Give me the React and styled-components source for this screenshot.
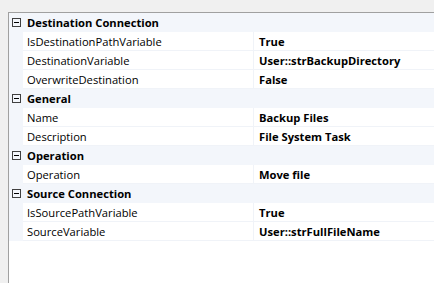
import styled, { createGlobalStyle } from "styled-components";

const Global = createGlobalStyle`
  html, body {
    margin: 0;
    padding: 0;
    background: #f0f0f0;
  }
  body {
    font-family: "Open Sans", "Noto Sans", "DejaVu Sans", sans-serif;
    font-size: 11.2px;
    color: #000;
  }
`;

const Frame = styled.div`
  width: 434px;
  height: 283px;
  padding: 12px 0 0 8px;
  box-sizing: border-box;
  overflow: hidden;
`;

const Grid = styled.div`
  height: 100%;
  background: #fff;
  border-top: 1px solid #a0a0a0;
  border-left: 1px solid #a0a0a0;
`;

const CategoryRow = styled.div`
  display: flex;
  align-items: center;
  height: 19px;
  background: #f3f6fb;
  font-weight: 700;
`;

const Toggle = styled.span`
  position: relative;
  box-sizing: border-box;
  width: 9px;
  height: 9px;
  margin: 0 6px 0 3px;
  border: 1px solid #404040;
  &::after {
    content: "";
    position: absolute;
    left: 1px;
    right: 1px;
    top: 3px;
    height: 1px;
    background: #000;
  }
`;

const PropRow = styled.div`
  display: grid;
  grid-template-columns: 14px 230px 1fr;
  height: 19px;
`;

const Margin = styled.div`
  background: #f3f6fb;
`;

const Cell = styled.div`
  display: flex;
  align-items: center;
  box-sizing: border-box;
  padding-left: ${(p) => (p.$value ? "5px" : "4px")};
  border-bottom: 1px solid #f0f3f8;
  border-left: ${(p) => (p.$value ? "1px solid #f0f3f8" : "none")};
  font-weight: ${(p) => (p.$value ? 700 : 400)};
  white-space: nowrap;
  overflow: hidden;
`;

const data = [
  {
    name: "Destination Connection",
    props: [
      ["IsDestinationPathVariable", "True"],
      ["DestinationVariable", "User::strBackupDirectory"],
      ["OverwriteDestination", "False"],
    ],
  },
  {
    name: "General",
    props: [
      ["Name", "Backup Files"],
      ["Description", "File System Task"],
    ],
  },
  {
    name: "Operation",
    props: [["Operation", "Move file"]],
  },
  {
    name: "Source Connection",
    props: [
      ["IsSourcePathVariable", "True"],
      ["SourceVariable", "User::strFullFileName"],
    ],
  },
];

export default function App() {
  return (
    <>
      <Global />
      <Frame>
        <Grid>
          {data.map((cat) => (
            <div key={cat.name}>
              <CategoryRow>
                <Toggle />
                {cat.name}
              </CategoryRow>
              {cat.props.map(([k, v]) => (
                <PropRow key={k}>
                  <Margin />
                  <Cell>{k}</Cell>
                  <Cell $value>{v}</Cell>
                </PropRow>
              ))}
            </div>
          ))}
        </Grid>
      </Frame>
    </>
  );
}
